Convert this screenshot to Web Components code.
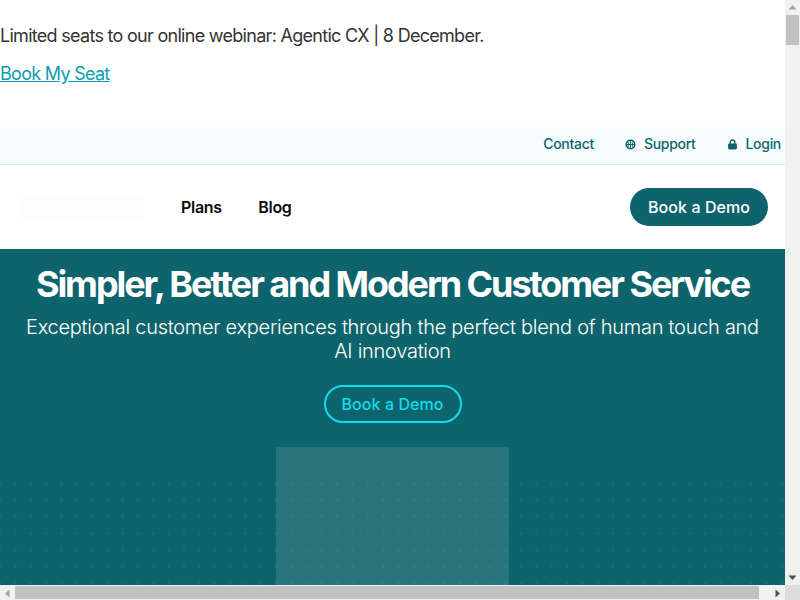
<!DOCTYPE html>
<html lang="en">
<head>
<meta charset="utf-8">
<title>Customer Service</title>
<style>
html,body{margin:0;padding:0;background:#fff;overflow:hidden}
body{font-family:Inter,"Liberation Sans",sans-serif;color:#333}
</style>
</head>
<body>
<browser-frame>
<promo-banner>Limited seats to our online webinar: Agentic CX | 8 December.<a slot="link" href="#">Book My Seat</a></promo-banner>
<top-bar></top-bar>
<main-nav></main-nav>
<hero-section></hero-section>
</browser-frame>
<script>
function def(name,html){
  customElements.define(name,class extends HTMLElement{
    constructor(){super();this.attachShadow({mode:'open'}).innerHTML=html;}
  });
}
const tri=(d)=>`<svg width="15" height="15" viewBox="0 0 15 15"><path d="${d}" fill="#505050"/></svg>`;
def('browser-frame',`<style>
:host{display:grid;grid-template:585px 15px/785px 15px;width:800px;height:600px;overflow:hidden;background:#fff}
.view{overflow:hidden;min-width:0;min-height:0}
.v{background:#f1f1f1;display:flex;flex-direction:column}
.h{background:#f1f1f1;display:flex;align-items:stretch;padding-top:1px;box-sizing:border-box}
.corner{background:#dcdcdc}
svg{display:block;flex:none}
.vt{width:13px;height:30px;margin-left:1px;background:#c1c1c1}
.ht{width:744px;height:13px;background:#c1c1c1}
</style>
<div class="view"><slot></slot></div>
<div class="v">${tri('M3.5 9.5h8L7.5 5z').replace('#505050','#a3a3a3')}<div class="vt"></div><span style="flex:1"></span>${tri('M3.5 5.5h8l-4 4.5z')}</div>
<div class="h">${tri('M9.5 3.5v8L5 7.5z').replace('#505050','#a3a3a3')}<div class="ht"></div><span style="flex:1"></span>${tri('M5.5 3.5v8l4.5-4z')}</div>
<div class="corner"></div>`);
def('promo-banner',`<style>
:host{display:block;height:126px;font:18px/26px Inter,"Liberation Sans",sans-serif;letter-spacing:-.71px;color:#333;box-sizing:border-box;padding-top:23px}
p{margin:0 0 12px}
::slotted(a){color:#0a9fae;text-decoration:underline}
</style><p><slot></slot></p><p><slot name="link"></slot></p>`);
def('top-bar',`<style>
:host{display:flex;justify-content:flex-end;align-items:center;gap:31px;height:39px;box-sizing:border-box;padding:0 4px 2px 0;background:#f7fdff;border-bottom:1px solid #d4ebf2;font:500 14px/20px Inter,"Liberation Sans",sans-serif;letter-spacing:-.3px;color:#0e646c}
span{display:flex;align-items:center;gap:8px}
svg{width:11px;height:11px;display:block}
</style>
<span>Contact</span>
<span><svg viewBox="0 0 12 12"><circle cx="6" cy="6" r="4.6" fill="none" stroke="#0e646c" stroke-width="1.8"/><path d="M6 1v10M1 6h10" stroke="#0e646c" stroke-width="1.1"/><path d="M3.2 2.6Q5.4 6 3.2 9.4M8.8 2.6Q6.6 6 8.8 9.4" fill="none" stroke="#0e646c" stroke-width=".9"/></svg>Support</span>
<span><svg viewBox="0 0 12 12"><path d="M3.5 6V3.6a2.5 2.5 0 0 1 5 0V6" fill="none" stroke="#0e646c" stroke-width="1.5"/><rect x="1.2" y="5" width="9.6" height="6.4" rx="1.2" fill="#0e646c"/></svg>Login</span>`);
def('main-nav',`<style>
:host{display:flex;align-items:center;height:84px;box-sizing:border-box;padding:0 17px 0 18px;background:#fff;font:600 16px/24px Inter,"Liberation Sans",sans-serif;color:#0a0a0a}
.logo{width:127px;height:27px;background:#fdfdfd;margin-right:36px}
nav{display:flex;gap:36.5px;flex:1;letter-spacing:-.3px}
.btn{display:flex;align-items:center;justify-content:center;width:138px;height:38px;border-radius:19px;background:#0e646c;color:#fff;font-weight:500;letter-spacing:.08px}
</style>
<div class="logo"></div><nav><span>Plans</span><span>Blog</span></nav><div class="btn">Book a Demo</div>`);
def('hero-section',`<style>
:host{display:block;position:relative;height:600px;background:#0e646c;color:#fff;text-align:center;font-family:Inter,"Liberation Sans",sans-serif}
h1{margin:0;padding-top:13px;font:700 36px/44px Inter,"Liberation Sans",sans-serif;letter-spacing:-2.08px}
p{margin:9px 0 0;padding:0 20px;font:350 20px/24px Inter,"Liberation Sans",sans-serif;letter-spacing:-.27px}
.btn{display:inline-flex;align-items:center;justify-content:center;box-sizing:border-box;width:138px;height:38px;margin-top:22px;border:2px solid #0fdcec;border-radius:19px;color:#0fdcec;font:500 16px/24px Inter,"Liberation Sans",sans-serif;letter-spacing:.08px}
.shot{width:233px;height:300px;margin:24px auto 0;background:rgba(255,255,255,.105)}
.dots{position:absolute;left:0;right:0;top:226px;bottom:0;background-image:radial-gradient(circle at center,rgba(255,255,255,.05) 0 1.2px,transparent 1.6px);background-size:15.33px 16.67px;background-position:-7.6px 0}
</style>
<h1>Simpler, Better and Modern Customer Service</h1>
<p>Exceptional customer experiences through the perfect blend of human touch and AI innovation</p>
<div class="btn">Book a Demo</div>
<div class="shot"></div>
<div class="dots"></div>`);
</script>
</body>
</html>
